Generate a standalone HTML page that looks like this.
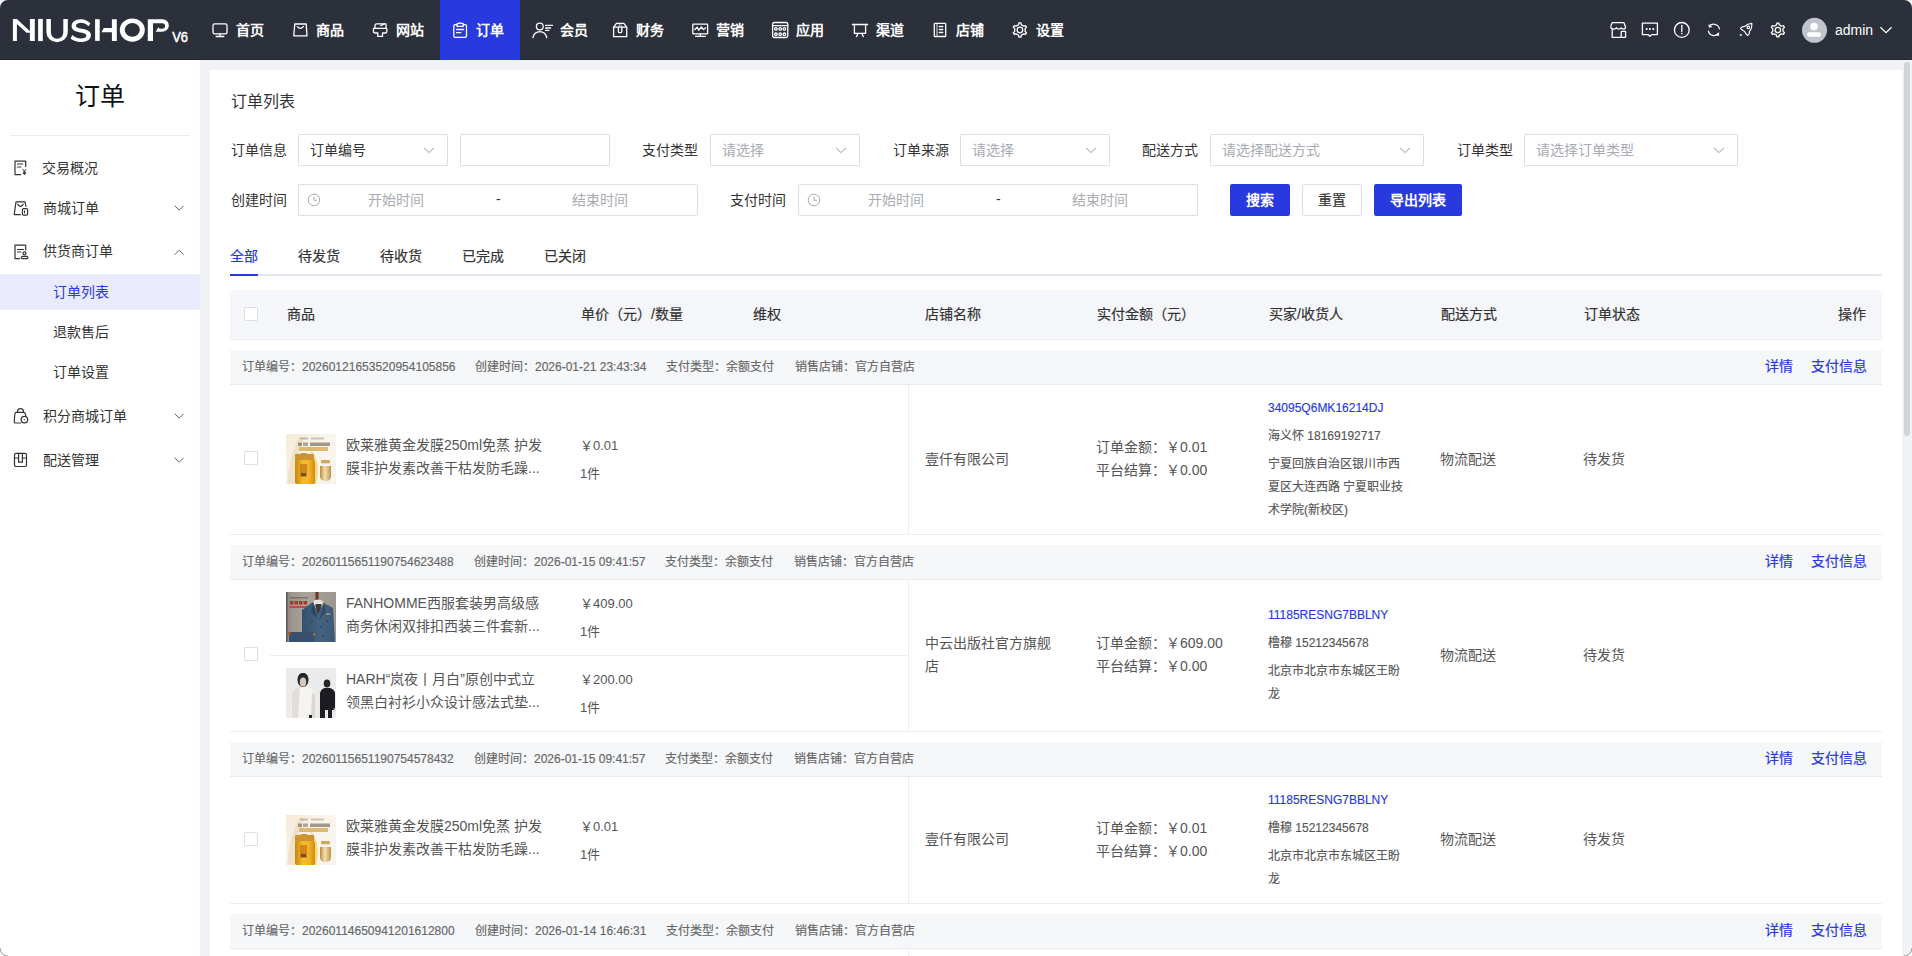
<!DOCTYPE html>
<html lang="zh-CN"><head><meta charset="utf-8"><title>订单列表</title>
<style>
html,body{margin:0;padding:0;width:1912px;height:956px;overflow:hidden;background:#fff}
body{position:relative;font-family:"Liberation Sans",sans-serif}
.t{position:absolute;line-height:1;white-space:nowrap}
.b{position:absolute;display:block}
</style></head><body>
<div class="b" style="left:0px;top:0px;width:1912px;height:60px;background:#2c303b"></div>
<div class="b" style="left:0px;top:59px;width:1912px;height:1px;background:#23262f"></div>
<div class="b" style="left:440px;top:0px;width:80px;height:60px;background:#2839e0"></div>
<svg class="b" style="left:0px;top:0px" width="200" height="60" viewBox="0 0 200 60" fill="none">
<g fill="#fff">
<path d="M12.9 18.9H16.9L29.9 31.2V18.9H34.8V41.1H29.9V32.8H26.6L16.9 23.9V41.1H12.9Z"/>
<rect x="38.1" y="18.9" width="4.7" height="22.2"/>
<path d="M46.4 18.9H50.9V32.5A6.2 6.2 0 0 0 63.3 32.5V18.9H67.8V32.2A10.7 10 0 0 1 46.4 32.2Z"/>
<path d="M90.4 23.4C88 21 85 19.2 80.8 19.2C75 19.2 71.6 22.3 71.6 26C71.6 30.6 76 31.6 80.6 32.5C84.6 33.3 86.4 34 86.4 35.7C86.4 37.3 84.4 38.4 81 38.4C77.6 38.4 74.6 37.1 72.4 34.9L70.6 38.6C73 40.6 76.6 42 81 42C86.8 42 90.9 39.4 90.9 35.2C90.9 30.8 86.6 29.7 81.8 28.8C77.6 28 76 27.4 76 25.8C76 24.2 78 22.8 80.9 22.8C84 22.8 86.4 24 88.4 26.2Z"/>
<rect x="95.1" y="19.2" width="4.6" height="21.7"/>
<path d="M103.8 27.9H111.9V19.2H116.8V40.9H111.9V32.2H101.5Z"/>
<path fill-rule="evenodd" d="M132.3 18.4A12.5 11.65 0 1 1 132.3 41.7A12.5 11.65 0 1 1 132.3 18.4ZM132.3 22.9A7.6 6.9 0 1 0 132.3 36.7A7.6 6.9 0 1 0 132.3 22.9Z"/>
<path d="M147.8 19.2H162.6A6.25 6.25 0 0 1 162.6 31.7H155.7L158.4 27.2L159.6 28.7H162.3A2.75 2.75 0 0 0 162.3 23.2H153V40.9H147.8Z"/>
</g>
<text x="172.2" y="41.8" fill="#fff" stroke="#fff" stroke-width="0.55" font-family="Liberation Sans" font-size="14.6" textLength="15.8" lengthAdjust="spacingAndGlyphs">V6</text>
</svg>
<svg class="b" style="left:208px;top:18px" width="30" height="24" viewBox="0 0 30 24" fill="none"><rect x="5" y="5.9" width="14" height="9.9" rx="1.6" stroke="#fff" stroke-width="1.3" stroke-linecap="round" stroke-linejoin="round"/><path d="M12 15.8V18.3M8.2 18.5H15.8" stroke="#fff" stroke-width="1.3" stroke-linecap="round" stroke-linejoin="round"/></svg>
<div class="t" style="left:236px;top:23px;font-size:14px;color:#fff;font-weight:700;">首页</div>
<svg class="b" style="left:288px;top:18px" width="30" height="24" viewBox="0 0 30 24" fill="none"><path d="M6.8 6H18.2L19 17.8H5.8Z" stroke="#fff" stroke-width="1.3" stroke-linecap="round" stroke-linejoin="round"/><path d="M9.3 8.6Q12.3 12 15.4 8.6" stroke="#fff" stroke-width="1.3" stroke-linecap="round" stroke-linejoin="round"/></svg>
<div class="t" style="left:316px;top:23px;font-size:14px;color:#fff;font-weight:700;">商品</div>
<svg class="b" style="left:368px;top:18px" width="30" height="24" viewBox="0 0 30 24" fill="none"><path d="M5.5 10.3H18.8V13.4Q18.8 15 17.2 15H14.5V18.4H9.8V15H7.1Q5.5 15 5.5 13.4Z" stroke="#fff" stroke-width="1.3" stroke-linecap="round" stroke-linejoin="round"/><path d="M7 10.3V7.2Q7.2 5.8 8.6 5.8H18V10.3" stroke="#fff" stroke-width="1.3" stroke-linecap="round" stroke-linejoin="round"/><path d="M12.8 7.6L16.2 5.9" stroke="#fff" stroke-width="1.3" stroke-linecap="round" stroke-linejoin="round"/></svg>
<div class="t" style="left:396px;top:23px;font-size:14px;color:#fff;font-weight:700;">网站</div>
<svg class="b" style="left:448px;top:18px" width="30" height="24" viewBox="0 0 30 24" fill="none"><path d="M9 6.6H7.2Q5.8 6.6 5.8 8V18Q5.8 19.4 7.2 19.4H17.1Q18.5 19.4 18.5 18V8Q18.5 6.6 17.1 6.6H15.3" stroke="#fff" stroke-width="1.3" stroke-linecap="round" stroke-linejoin="round"/><path d="M9 8.3V6.2Q9 5.4 10 5.4H11.4Q12.2 4.2 13 5.4H14.4Q15.3 5.4 15.3 6.2V8.3Z" stroke="#fff" stroke-width="1.3" stroke-linecap="round" stroke-linejoin="round"/><path d="M8.6 11.5H15.6M8.6 14.7H12.8" stroke="#fff" stroke-width="1.3" stroke-linecap="round" stroke-linejoin="round"/></svg>
<div class="t" style="left:476px;top:23px;font-size:14px;color:#fff;font-weight:700;">订单</div>
<svg class="b" style="left:528px;top:18px" width="30" height="24" viewBox="0 0 30 24" fill="none"><circle cx="11.8" cy="8.5" r="3.4" stroke="#fff" stroke-width="1.3" stroke-linecap="round" stroke-linejoin="round"/><path d="M5 19.6A6.9 6.9 0 0 1 18.7 19.6" stroke="#fff" stroke-width="1.3" stroke-linecap="round" stroke-linejoin="round"/><path d="M17.6 7.3H24.5M17.6 10H22.6M17.6 12.4H20.8" stroke="#fff" stroke-width="1.3" stroke-linecap="round" stroke-linejoin="round"/></svg>
<div class="t" style="left:560px;top:23px;font-size:14px;color:#fff;font-weight:700;">会员</div>
<svg class="b" style="left:608px;top:18px" width="30" height="24" viewBox="0 0 30 24" fill="none"><path d="M5.6 9.2V18.7H18.7V9.2L15.8 5.3H8.5Z" stroke="#fff" stroke-width="1.3" stroke-linecap="round" stroke-linejoin="round"/><path d="M5.6 9.2H18.7" stroke="#fff" stroke-width="1.3" stroke-linecap="round" stroke-linejoin="round"/><path d="M10.4 9.2V13.6Q10.4 14.6 11.4 14.6H12.8Q13.8 14.6 13.8 13.6V9.2" stroke="#fff" stroke-width="1.3" stroke-linecap="round" stroke-linejoin="round"/><path d="M11 9L11.6 5.6M13.3 9L12.8 5.6" stroke="#fff" stroke-width="1" opacity=".6"/></svg>
<div class="t" style="left:636px;top:23px;font-size:14px;color:#fff;font-weight:700;">财务</div>
<svg class="b" style="left:688px;top:18px" width="30" height="24" viewBox="0 0 30 24" fill="none"><rect x="4.8" y="6.2" width="14.8" height="9.6" rx=".6" stroke="#fff" stroke-width="1.3" stroke-linecap="round" stroke-linejoin="round"/><path d="M6.8 11.5L9.2 9.3L10.8 12.2L13.4 9L15.6 11.6L17.7 9.6" stroke="#fff" stroke-width="1.3" stroke-linecap="round" stroke-linejoin="round"/><path d="M12.3 15.8V17.4M7.6 18.3H17.4" stroke="#fff" stroke-width="1.3" stroke-linecap="round" stroke-linejoin="round"/></svg>
<div class="t" style="left:716px;top:23px;font-size:14px;color:#fff;font-weight:700;">营销</div>
<svg class="b" style="left:768px;top:18px" width="30" height="24" viewBox="0 0 30 24" fill="none"><rect x="4.6" y="4.5" width="15.2" height="15" rx="1.8" stroke="#fff" stroke-width="1.3" stroke-linecap="round" stroke-linejoin="round"/><path d="M4.6 7.6H19.8" stroke="#fff" stroke-width="1.3" stroke-linecap="round" stroke-linejoin="round"/><circle cx="7.9" cy="10.9" r="1.3" stroke="#fff" stroke-width="1.3" stroke-linecap="round" stroke-linejoin="round"/><circle cx="12.2" cy="10.9" r="1.3" stroke="#fff" stroke-width="1.3" stroke-linecap="round" stroke-linejoin="round"/><circle cx="16.4" cy="10.9" r="1.3" stroke="#fff" stroke-width="1.3" stroke-linecap="round" stroke-linejoin="round"/><circle cx="7.9" cy="16.3" r="1.3" stroke="#fff" stroke-width="1.3" stroke-linecap="round" stroke-linejoin="round"/><circle cx="12.2" cy="16.3" r="1.3" stroke="#fff" stroke-width="1.3" stroke-linecap="round" stroke-linejoin="round"/><circle cx="16.4" cy="16.3" r="1.3" stroke="#fff" stroke-width="1.3" stroke-linecap="round" stroke-linejoin="round"/></svg>
<div class="t" style="left:796px;top:23px;font-size:14px;color:#fff;font-weight:700;">应用</div>
<svg class="b" style="left:848px;top:18px" width="30" height="24" viewBox="0 0 30 24" fill="none"><path d="M4.4 6.5H19.6" stroke="#fff" stroke-width="1.3" stroke-linecap="round" stroke-linejoin="round"/><path d="M6.4 6.5V15.4H17.6V6.5" stroke="#fff" stroke-width="1.3" stroke-linecap="round" stroke-linejoin="round"/><path d="M9.8 15.6Q9.3 17.6 8.4 18.6M14 15.6Q14.5 17.6 15.4 18.6" stroke="#fff" stroke-width="1.3" stroke-linecap="round" stroke-linejoin="round"/></svg>
<div class="t" style="left:876px;top:23px;font-size:14px;color:#fff;font-weight:700;">渠道</div>
<svg class="b" style="left:928px;top:18px" width="30" height="24" viewBox="0 0 30 24" fill="none"><rect x="6.3" y="5.4" width="11.4" height="13.1" rx=".6" stroke="#fff" stroke-width="1.3" stroke-linecap="round" stroke-linejoin="round"/><path d="M9 6V18" stroke="#bbb" stroke-width="1.3"/><path d="M11.3 8.5H14.8M11.3 11.5H14.8M11.3 14.5H14.8" stroke="#fff" stroke-width="1.3" stroke-linecap="round" stroke-linejoin="round"/></svg>
<div class="t" style="left:956px;top:23px;font-size:14px;color:#fff;font-weight:700;">店铺</div>
<svg class="b" style="left:1008px;top:18px" width="30" height="24" viewBox="0 0 30 24" fill="none"><path d="M10.50 6.78 L10.88 4.97 L12.92 4.97 L13.30 6.78 L15.72 8.18 L17.48 7.60 L18.49 9.37 L17.12 10.60 L17.12 13.40 L18.49 14.63 L17.48 16.40 L15.72 15.82 L13.30 17.22 L12.92 19.03 L10.88 19.03 L10.50 17.22 L8.08 15.82 L6.32 16.40 L5.31 14.63 L6.68 13.40 L6.68 10.60 L5.31 9.37 L6.32 7.60 L8.08 8.18Z" stroke="#fff" stroke-width="1.3" stroke-linecap="round" stroke-linejoin="round"/><circle cx="11.9" cy="12" r="2.8" stroke="#fff" stroke-width="1.3" stroke-linecap="round" stroke-linejoin="round"/></svg>
<div class="t" style="left:1036px;top:23px;font-size:14px;color:#fff;font-weight:700;">设置</div>
<svg class="b" style="left:1604px;top:18px" width="30" height="24" viewBox="0 0 30 24" fill="none"><path d="M8.4 4.6H19.8L21.4 8.6Q21.6 11.2 19.4 11.2Q17.8 11.2 17.2 9.8Q16.4 11.2 14.8 11.2Q13.2 11.2 12.4 9.8Q11.6 11.2 10 11.2Q8.2 11.2 6.8 9.8Q6.4 7.6 8.4 4.6Z" stroke="#fff" stroke-width="1.3" stroke-linecap="round" stroke-linejoin="round"/><path d="M8.2 11.4V19.4H16.6" stroke="#fff" stroke-width="1.3" stroke-linecap="round" stroke-linejoin="round"/><rect x="17.2" y="13.4" width="4.4" height="6" rx=".6" stroke="#fff" stroke-width="1.3" stroke-linecap="round" stroke-linejoin="round"/></svg>
<svg class="b" style="left:1636px;top:18px" width="30" height="24" viewBox="0 0 30 24" fill="none"><path d="M6.4 5.2H21.4V16.6H15.6L13.9 18.3L12.2 16.6H6.4Z" stroke="#fff" stroke-width="1.3" stroke-linecap="round" stroke-linejoin="round"/><path d="M10.6 11H10.8M13.8 11H14M17.2 11H17.4" stroke="#fff" stroke-width="1.8" stroke-linecap="round"/></svg>
<svg class="b" style="left:1668px;top:18px" width="30" height="24" viewBox="0 0 30 24" fill="none"><circle cx="13.8" cy="11.9" r="7.4" stroke="#fff" stroke-width="1.3" stroke-linecap="round" stroke-linejoin="round"/><path d="M13.8 7.3V13.6" stroke="#fff" stroke-width="1.3" stroke-linecap="round" stroke-linejoin="round"/><circle cx="13.8" cy="15.6" r=".8" fill="#fff"/></svg>
<svg class="b" style="left:1700px;top:18px" width="30" height="24" viewBox="0 0 30 24" fill="none"><path d="M9.2 8.4A5.8 5.8 0 0 1 19.5 11.4" stroke="#fff" stroke-width="1.15" fill="none"/><path d="M8.3 12.6A5.8 5.8 0 0 0 18.7 15.2" stroke="#fff" stroke-width="1.15" fill="none"/><path d="M8.6 5.9L8.8 9.8L12.3 9Z" fill="#fff"/><path d="M19.2 14.2L18.9 18L15.6 17Z" fill="#fff"/></svg>
<svg class="b" style="left:1734px;top:18px" width="30" height="24" viewBox="0 0 30 24" fill="none"><path d="M17.8 5.4C14.6 5.6 12.4 6.8 10.8 8.4L8.4 8.8Q6.8 9.4 6.6 10.6L8.6 12.2Q10 12.8 10.6 13.6Q11.4 14.4 11.8 15.6L13.4 17.4Q14.6 17.2 15.2 15.6L15.6 13.2C17.2 11.6 18 9 17.8 5.4Z" stroke="#fff" stroke-width="1.2" stroke-linejoin="round" fill="none"/><circle cx="14.3" cy="9.4" r="1.3" stroke="#fff" stroke-width="1.1" fill="none"/><path d="M6.9 15.4L7.4 16.6L8.6 17.1L7.4 17.6L6.9 18.8L6.4 17.6L5.2 17.1L6.4 16.6Z" fill="#fff"/></svg>
<svg class="b" style="left:1766px;top:18px" width="30" height="24" viewBox="0 0 30 24" fill="none"><path d="M10.53 6.88 L10.90 5.07 L12.90 5.07 L13.27 6.88 L15.65 8.25 L17.40 7.67 L18.40 9.41 L17.02 10.63 L17.02 13.37 L18.40 14.59 L17.40 16.33 L15.65 15.75 L13.27 17.12 L12.90 18.93 L10.90 18.93 L10.53 17.12 L8.15 15.75 L6.40 16.33 L5.40 14.59 L6.78 13.37 L6.78 10.63 L5.40 9.41 L6.40 7.67 L8.15 8.25Z" stroke="#fff" stroke-width="1.3" stroke-linecap="round" stroke-linejoin="round"/><circle cx="11.9" cy="12" r="2.7" stroke="#fff" stroke-width="1.3" stroke-linecap="round" stroke-linejoin="round"/></svg>
<svg class="b" style="left:1800px;top:16px" width="30" height="30" viewBox="0 0 30 30" fill="none"><circle cx="14.5" cy="14.3" r="12.5" fill="#c0c4cc"/><circle cx="14" cy="10.5" r="3.8" fill="#fff"/><rect x="7" y="16.2" width="14" height="4.6" rx="2.3" fill="#fff"/></svg>
<div class="t" style="left:1835px;top:23px;font-size:14px;color:#fff;font-weight:400;">admin</div>
<svg class="b" style="left:1876px;top:18px" width="20" height="24" viewBox="0 0 20 24" fill="none"><path d="M4.4 9.2L10 14.6L15.6 9.2" stroke="#fff" stroke-width="1.2" fill="none"/></svg>
<div class="b" style="left:0px;top:60px;width:200px;height:896px;background:#fff"></div>
<div class="t" style="left:75px;top:84px;font-size:25px;color:#111;font-weight:400;letter-spacing:0px;">订单</div>
<div class="b" style="left:10px;top:135px;width:180px;height:1px;background:#e9eaf2"></div>
<svg class="b" style="left:10px;top:156px" width="24" height="24" viewBox="0 0 24 24" fill="none"><path d="M10.8 18.6H5V5.2H15.7V10.5" stroke="#333" stroke-width="1.2" stroke-linecap="round" stroke-linejoin="round"/><path d="M7.4 8H12.7M7.4 11H10.8" stroke="#333" stroke-width="1.2" stroke-linecap="round" stroke-linejoin="round"/><path d="M12.6 13.2L14.4 15.2L16.2 13.2M14.4 15.2V18.8M12.8 16.2H16M12.8 17.6H16" stroke="#333" stroke-width="1"/></svg>
<svg class="b" style="left:10px;top:196px" width="24" height="24" viewBox="0 0 24 24" fill="none"><path d="M10.5 18.6H4.2L6 5.8H15L16 10.5" stroke="#333" stroke-width="1.2" stroke-linecap="round" stroke-linejoin="round"/><path d="M7.8 8.3Q10.5 12.3 13.2 8.3" stroke="#333" stroke-width="1.2" stroke-linecap="round" stroke-linejoin="round"/><rect x="12.4" y="12.6" width="5.2" height="6.6" rx="1.2" stroke="#333" stroke-width="1.2" stroke-linecap="round" stroke-linejoin="round"/><path d="M14.5 14.4V17.4" stroke="#333" stroke-width="1"/></svg>
<svg class="b" style="left:10px;top:240px" width="24" height="24" viewBox="0 0 24 24" fill="none"><path d="M9.6 18.6H5V5.2H15.7V10" stroke="#333" stroke-width="1.2" stroke-linecap="round" stroke-linejoin="round"/><path d="M7.4 9.5H13.6M7.4 12H10.8" stroke="#333" stroke-width="1.2" stroke-linecap="round" stroke-linejoin="round"/><circle cx="14.5" cy="13.3" r="1.5" stroke="#333" stroke-width="1.2" stroke-linecap="round" stroke-linejoin="round"/><rect x="11.4" y="16.3" width="6.4" height="2.4" rx="1" stroke="#333" stroke-width="1.2" stroke-linecap="round" stroke-linejoin="round"/></svg>
<svg class="b" style="left:10px;top:404px" width="24" height="24" viewBox="0 0 24 24" fill="none"><path d="M10.4 19H6Q4.2 19 4.3 17.2L4.8 10Q5 8.3 6.6 8.3H13.6Q15 8.3 15.4 10L15.8 11.5" stroke="#333" stroke-width="1.2" stroke-linecap="round" stroke-linejoin="round"/><path d="M7.5 8.3V7.6A3 3 0 0 1 13.5 7.6V8.3" stroke="#333" stroke-width="1.2" stroke-linecap="round" stroke-linejoin="round"/><circle cx="14.4" cy="15.6" r="3.3" stroke="#333" stroke-width="1.2" stroke-linecap="round" stroke-linejoin="round"/><circle cx="14.4" cy="15.6" r=".7" fill="#333"/></svg>
<svg class="b" style="left:10px;top:448px" width="24" height="24" viewBox="0 0 24 24" fill="none"><rect x="4.5" y="5.3" width="12" height="13.2" rx="1.6" stroke="#333" stroke-width="1.2" stroke-linecap="round" stroke-linejoin="round"/><path d="M4.5 10H8.4M12.6 10H16.5" stroke="#333" stroke-width="1.2" stroke-linecap="round" stroke-linejoin="round"/><path d="M8.6 5.3V14.2H12.4V5.3" stroke="#333" stroke-width="1.2" stroke-linecap="round" stroke-linejoin="round"/></svg>
<div class="t" style="left:42px;top:161px;font-size:14px;color:#333;font-weight:400;">交易概况</div>
<div class="t" style="left:43px;top:201px;font-size:14px;color:#333;font-weight:400;">商城订单</div>
<div class="t" style="left:43px;top:244px;font-size:14px;color:#333;font-weight:400;">供货商订单</div>
<div class="t" style="left:43px;top:409px;font-size:14px;color:#333;font-weight:400;">积分商城订单</div>
<div class="t" style="left:43px;top:453px;font-size:14px;color:#333;font-weight:400;">配送管理</div>
<svg class="b" style="left:172px;top:200px" width="14" height="14" viewBox="0 0 14 14" fill="none"><path d="M2.7 5.7L7.2 10.2L11.7 5.7" stroke="#666" stroke-width="1" fill="none"/></svg>
<svg class="b" style="left:172px;top:244px" width="14" height="14" viewBox="0 0 14 14" fill="none"><path d="M2.7 10.7L7.2 6.2L11.7 10.7" stroke="#666" stroke-width="1" fill="none"/></svg>
<svg class="b" style="left:172px;top:408px" width="14" height="14" viewBox="0 0 14 14" fill="none"><path d="M2.7 5.7L7.2 10.2L11.7 5.7" stroke="#666" stroke-width="1" fill="none"/></svg>
<svg class="b" style="left:172px;top:452px" width="14" height="14" viewBox="0 0 14 14" fill="none"><path d="M2.7 5.7L7.2 10.2L11.7 5.7" stroke="#666" stroke-width="1" fill="none"/></svg>
<div class="b" style="left:0px;top:274px;width:200px;height:36px;background:#e9ebfc"></div>
<div class="t" style="left:53px;top:285px;font-size:14px;color:#2839e0;font-weight:400;">订单列表</div>
<div class="t" style="left:53px;top:325px;font-size:14px;color:#333;font-weight:400;">退款售后</div>
<div class="t" style="left:53px;top:365px;font-size:14px;color:#333;font-weight:400;">订单设置</div>
<div class="b" style="left:200px;top:60px;width:1712px;height:896px;background:#f1f2f5"></div>
<div class="b" style="left:210px;top:70px;width:1692px;height:900px;background:#fff"></div>
<div class="b" style="left:1904px;top:62px;width:6px;height:374px;background:#d3d4d8;border-radius:3px"></div>
<div class="t" style="left:231px;top:94px;font-size:16px;color:#333;font-weight:400;">订单列表</div>
<div class="t" style="left:231px;top:143px;font-size:14px;color:#333;font-weight:400;">订单信息</div>
<div class="b" style="left:298px;top:134px;width:150px;height:32px;box-sizing:border-box;border:1px solid #dcdfe6;border-radius:1px;background:#fff"></div>
<div class="t" style="left:310px;top:143px;font-size:14px;color:#333;font-weight:400;">订单编号</div>
<svg class="b" style="left:422px;top:143px" width="14" height="14" viewBox="0 0 14 14" fill="none"><path d="M2 4.8L7 9.6L12 4.8" stroke="#b4b7be" stroke-width="1.1" fill="none"/></svg>
<div class="b" style="left:460px;top:134px;width:150px;height:32px;box-sizing:border-box;border:1px solid #dcdfe6;border-radius:1px"></div>
<div class="t" style="left:642px;top:143px;font-size:14px;color:#333;font-weight:400;">支付类型</div>
<div class="b" style="left:710px;top:134px;width:150px;height:32px;box-sizing:border-box;border:1px solid #dcdfe6;border-radius:1px;background:#fff"></div>
<div class="t" style="left:722px;top:143px;font-size:14px;color:#a8abb2;font-weight:400;">请选择</div>
<svg class="b" style="left:834px;top:143px" width="14" height="14" viewBox="0 0 14 14" fill="none"><path d="M2 4.8L7 9.6L12 4.8" stroke="#b4b7be" stroke-width="1.1" fill="none"/></svg>
<div class="t" style="left:893px;top:143px;font-size:14px;color:#333;font-weight:400;">订单来源</div>
<div class="b" style="left:960px;top:134px;width:150px;height:32px;box-sizing:border-box;border:1px solid #dcdfe6;border-radius:1px;background:#fff"></div>
<div class="t" style="left:972px;top:143px;font-size:14px;color:#a8abb2;font-weight:400;">请选择</div>
<svg class="b" style="left:1084px;top:143px" width="14" height="14" viewBox="0 0 14 14" fill="none"><path d="M2 4.8L7 9.6L12 4.8" stroke="#b4b7be" stroke-width="1.1" fill="none"/></svg>
<div class="t" style="left:1142px;top:143px;font-size:14px;color:#333;font-weight:400;">配送方式</div>
<div class="b" style="left:1210px;top:134px;width:214px;height:32px;box-sizing:border-box;border:1px solid #dcdfe6;border-radius:1px;background:#fff"></div>
<div class="t" style="left:1222px;top:143px;font-size:14px;color:#a8abb2;font-weight:400;">请选择配送方式</div>
<svg class="b" style="left:1398px;top:143px" width="14" height="14" viewBox="0 0 14 14" fill="none"><path d="M2 4.8L7 9.6L12 4.8" stroke="#b4b7be" stroke-width="1.1" fill="none"/></svg>
<div class="t" style="left:1457px;top:143px;font-size:14px;color:#333;font-weight:400;">订单类型</div>
<div class="b" style="left:1524px;top:134px;width:214px;height:32px;box-sizing:border-box;border:1px solid #dcdfe6;border-radius:1px;background:#fff"></div>
<div class="t" style="left:1536px;top:143px;font-size:14px;color:#a8abb2;font-weight:400;">请选择订单类型</div>
<svg class="b" style="left:1712px;top:143px" width="14" height="14" viewBox="0 0 14 14" fill="none"><path d="M2 4.8L7 9.6L12 4.8" stroke="#b4b7be" stroke-width="1.1" fill="none"/></svg>
<div class="t" style="left:231px;top:193px;font-size:14px;color:#333;font-weight:400;">创建时间</div>
<div class="b" style="left:298px;top:184px;width:400px;height:32px;box-sizing:border-box;border:1px solid #dcdfe6;border-radius:1px"></div>
<svg class="b" style="left:306px;top:192px" width="16" height="16" viewBox="0 0 16 16" fill="none"><circle cx="8" cy="8" r="5.8" stroke="#a8abb2" stroke-width="1" fill="none"/><path d="M8 4.6V8.3H10.8" stroke="#a8abb2" stroke-width="1" fill="none"/></svg>
<div class="t" style="left:368px;top:193px;font-size:14px;color:#a8abb2;font-weight:400;">开始时间</div>
<div class="t" style="left:496px;top:192px;font-size:14px;color:#333;font-weight:400;">-</div>
<div class="t" style="left:572px;top:193px;font-size:14px;color:#a8abb2;font-weight:400;">结束时间</div>
<div class="t" style="left:730px;top:193px;font-size:14px;color:#333;font-weight:400;">支付时间</div>
<div class="b" style="left:798px;top:184px;width:400px;height:32px;box-sizing:border-box;border:1px solid #dcdfe6;border-radius:1px"></div>
<svg class="b" style="left:806px;top:192px" width="16" height="16" viewBox="0 0 16 16" fill="none"><circle cx="8" cy="8" r="5.8" stroke="#a8abb2" stroke-width="1" fill="none"/><path d="M8 4.6V8.3H10.8" stroke="#a8abb2" stroke-width="1" fill="none"/></svg>
<div class="t" style="left:868px;top:193px;font-size:14px;color:#a8abb2;font-weight:400;">开始时间</div>
<div class="t" style="left:996px;top:192px;font-size:14px;color:#333;font-weight:400;">-</div>
<div class="t" style="left:1072px;top:193px;font-size:14px;color:#a8abb2;font-weight:400;">结束时间</div>
<div class="b" style="left:1230px;top:184px;width:60px;height:32px;background:#2839e0;border-radius:2px"></div>
<div class="t" style="left:1246px;top:193px;font-size:14px;color:#fff;font-weight:700;">搜索</div>
<div class="b" style="left:1302px;top:184px;width:60px;height:32px;box-sizing:border-box;border:1px solid #dcdfe6;border-radius:1px;background:#fff"></div>
<div class="t" style="left:1318px;top:193px;font-size:14px;color:#333;font-weight:400;-webkit-text-stroke:0.2px #333;">重置</div>
<div class="b" style="left:1374px;top:184px;width:88px;height:32px;background:#2839e0;border-radius:2px"></div>
<div class="t" style="left:1390px;top:193px;font-size:14px;color:#fff;font-weight:700;">导出列表</div>
<div class="b" style="left:230px;top:274px;width:1652px;height:2px;background:#e4e7ed"></div>
<div class="b" style="left:230px;top:274px;width:28px;height:2px;background:#2839e0"></div>
<div class="t" style="left:230px;top:249px;font-size:14px;color:#2839e0;font-weight:400;-webkit-text-stroke:0.2px #2839e0;">全部</div>
<div class="t" style="left:298px;top:249px;font-size:14px;color:#333;font-weight:400;-webkit-text-stroke:0.2px #333;">待发货</div>
<div class="t" style="left:380px;top:249px;font-size:14px;color:#333;font-weight:400;-webkit-text-stroke:0.2px #333;">待收货</div>
<div class="t" style="left:462px;top:249px;font-size:14px;color:#333;font-weight:400;-webkit-text-stroke:0.2px #333;">已完成</div>
<div class="t" style="left:544px;top:249px;font-size:14px;color:#333;font-weight:400;-webkit-text-stroke:0.2px #333;">已关闭</div>
<div class="b" style="left:230px;top:290px;width:1652px;height:49px;background:#f5f6f9"></div>
<div class="b" style="left:230px;top:339px;width:1652px;height:1px;background:#ebeef5"></div>
<div class="b" style="left:244px;top:307px;width:14px;height:14px;box-sizing:border-box;border:1px solid #dcdfe6;border-radius:1px;background:#fff"></div>
<div class="t" style="left:287px;top:307px;font-size:14px;color:#333;font-weight:400;-webkit-text-stroke:0.2px #333;">商品</div>
<div class="t" style="left:581px;top:307px;font-size:14px;color:#333;font-weight:400;-webkit-text-stroke:0.2px #333;">单价（元）/数量</div>
<div class="t" style="left:753px;top:307px;font-size:14px;color:#333;font-weight:400;-webkit-text-stroke:0.2px #333;">维权</div>
<div class="t" style="left:925px;top:307px;font-size:14px;color:#333;font-weight:400;-webkit-text-stroke:0.2px #333;">店铺名称</div>
<div class="t" style="left:1097px;top:307px;font-size:14px;color:#333;font-weight:400;-webkit-text-stroke:0.2px #333;">实付金额（元）</div>
<div class="t" style="left:1269px;top:307px;font-size:14px;color:#333;font-weight:400;-webkit-text-stroke:0.2px #333;">买家/收货人</div>
<div class="t" style="left:1441px;top:307px;font-size:14px;color:#333;font-weight:400;-webkit-text-stroke:0.2px #333;">配送方式</div>
<div class="t" style="left:1584px;top:307px;font-size:14px;color:#333;font-weight:400;-webkit-text-stroke:0.2px #333;">订单状态</div>
<div class="t" style="left:1838px;top:307px;font-size:14px;color:#333;font-weight:400;-webkit-text-stroke:0.2px #333;">操作</div>
<div class="b" style="left:230px;top:350px;width:1652px;height:34px;background:#f6f7f9"></div>
<div class="b" style="left:230px;top:384px;width:1652px;height:1px;background:#e8eaf0"></div>
<div class="t" style="left:242px;top:361px;font-size:12px;color:#666;font-weight:400;-webkit-text-stroke:0.15px #666;">订单编号：20260121653520954105856</div>
<div class="t" style="left:475px;top:361px;font-size:12px;color:#666;font-weight:400;-webkit-text-stroke:0.15px #666;">创建时间：2026-01-21 23:43:34</div>
<div class="t" style="left:666px;top:361px;font-size:12px;color:#666;font-weight:400;-webkit-text-stroke:0.15px #666;">支付类型：余额支付</div>
<div class="t" style="left:795px;top:361px;font-size:12px;color:#666;font-weight:400;-webkit-text-stroke:0.15px #666;">销售店铺：官方自营店</div>
<div class="t" style="left:1765px;top:359px;font-size:14px;color:#2839e0;font-weight:400;-webkit-text-stroke:0.2px #2839e0;">详情</div>
<div class="t" style="left:1811px;top:359px;font-size:14px;color:#2839e0;font-weight:400;-webkit-text-stroke:0.2px #2839e0;">支付信息</div>
<div class="b" style="left:908px;top:385px;width:1px;height:149px;background:#ebeef5"></div>
<div class="b" style="left:230px;top:534px;width:1652px;height:1px;background:#ebeef5"></div>
<div class="b" style="left:244px;top:451px;width:14px;height:14px;box-sizing:border-box;border:1px solid #dcdfe6;border-radius:1px;background:#fff"></div>
<svg class="b" style="left:286px;top:434px" width="50" height="50" viewBox="0 0 50 50" fill="none">
<defs><linearGradient id="gbg1" x1="0" y1="0" x2="1" y2="1"><stop offset="0" stop-color="#f5ead8"/><stop offset=".5" stop-color="#faf5ee"/><stop offset="1" stop-color="#f6f3ef"/></linearGradient>
<linearGradient id="gb1" x1="0" y1="0" x2="1" y2="0"><stop offset="0" stop-color="#c98512"/><stop offset=".4" stop-color="#f6bb2a"/><stop offset=".7" stop-color="#f2b526"/><stop offset="1" stop-color="#d08a14"/></linearGradient>
<linearGradient id="gj1" x1="0" y1="0" x2="1" y2="0"><stop offset="0" stop-color="#b58a3e"/><stop offset=".45" stop-color="#f5e2b0"/><stop offset="1" stop-color="#b99448"/></linearGradient>
<filter id="bl1"><feGaussianBlur stdDeviation=".4"/></filter></defs>
<rect width="50" height="50" fill="url(#gbg1)"/>
<g filter="url(#bl1)">
<path d="M1 50Q3 22 13 3L19 3Q9 22 11 50Z" fill="#f0e0c4" opacity=".9"/>
<rect x="14" y="3.5" width="8" height="2" fill="#8a8070" opacity=".45"/><rect x="25" y="3.5" width="13" height="2" fill="#8a8070" opacity=".4"/>
<rect x="12" y="8.5" width="4" height="3.5" fill="#6a5a48" opacity=".6"/><rect x="17" y="8.5" width="5" height="3.5" fill="#6a5a48" opacity=".5"/><rect x="24" y="8.5" width="20" height="3.5" fill="#5a4a3a" opacity=".55"/>
<rect x="13" y="13" width="29" height="4" fill="#dcba74"/>
<path d="M26 17Q35 30 30 50H24Q30 32 25 17Z" fill="#f6d56a" opacity=".85"/>
<rect x="14" y="19" width="8" height="8" rx="2" fill="#c29440"/>
<rect x="9" y="20" width="19" height="7" rx="1" fill="#cc9430"/>
<rect x="9" y="26" width="20" height="24" rx="2" fill="url(#gb1)"/>
<rect x="14" y="30" width="7" height="13" fill="#c77a1a" opacity=".8"/>
<rect x="15" y="39" width="5" height="3" fill="#4a3a28" opacity=".7"/>
<rect x="35" y="26" width="9" height="3.5" rx="1" fill="#cfa862"/>
<rect x="34.5" y="29.5" width="10" height="2" fill="#f6f3ee"/>
<path d="M34 32H45V42Q45 47 39.5 47Q34 47 34 42Z" fill="url(#gj1)"/>
</g></svg>
<div class="t" style="left:346px;top:438px;font-size:14px;color:#555;font-weight:400;">欧莱雅黄金发膜250ml免蒸 护发</div>
<div class="t" style="left:346px;top:461px;font-size:14px;color:#555;font-weight:400;">膜非护发素改善干枯发防毛躁...</div>
<div class="t" style="left:580px;top:439px;font-size:13px;color:#555;font-weight:400;">￥0.01</div>
<div class="t" style="left:580px;top:467px;font-size:13px;color:#555;font-weight:400;">1件</div>
<div class="t" style="left:925px;top:452px;font-size:14px;color:#555;font-weight:400;">壹仟有限公司</div>
<div class="t" style="left:1096px;top:440px;font-size:14px;color:#555;font-weight:400;">订单金额：￥0.01</div>
<div class="t" style="left:1096px;top:463px;font-size:14px;color:#555;font-weight:400;">平台结算：￥0.00</div>
<div class="t" style="left:1268px;top:402px;font-size:12px;color:#2839e0;font-weight:400;-webkit-text-stroke:0.15px #2839e0;">34095Q6MK16214DJ</div>
<div class="t" style="left:1268px;top:430px;font-size:12px;color:#555;font-weight:400;-webkit-text-stroke:0.15px #555;">海义怀 18169192717</div>
<div class="t" style="left:1268px;top:458px;font-size:12px;color:#555;font-weight:400;-webkit-text-stroke:0.15px #555;">宁夏回族自治区银川市西</div>
<div class="t" style="left:1268px;top:481px;font-size:12px;color:#555;font-weight:400;-webkit-text-stroke:0.15px #555;">夏区大连西路 宁夏职业技</div>
<div class="t" style="left:1268px;top:504px;font-size:12px;color:#555;font-weight:400;-webkit-text-stroke:0.15px #555;">术学院(新校区)</div>
<div class="t" style="left:1440px;top:452px;font-size:14px;color:#555;font-weight:400;">物流配送</div>
<div class="t" style="left:1583px;top:452px;font-size:14px;color:#555;font-weight:400;">待发货</div>
<div class="b" style="left:230px;top:545px;width:1652px;height:34px;background:#f6f7f9"></div>
<div class="b" style="left:230px;top:579px;width:1652px;height:1px;background:#e8eaf0"></div>
<div class="t" style="left:242px;top:556px;font-size:12px;color:#666;font-weight:400;-webkit-text-stroke:0.15px #666;">订单编号：20260115651190754623488</div>
<div class="t" style="left:474px;top:556px;font-size:12px;color:#666;font-weight:400;-webkit-text-stroke:0.15px #666;">创建时间：2026-01-15 09:41:57</div>
<div class="t" style="left:665px;top:556px;font-size:12px;color:#666;font-weight:400;-webkit-text-stroke:0.15px #666;">支付类型：余额支付</div>
<div class="t" style="left:794px;top:556px;font-size:12px;color:#666;font-weight:400;-webkit-text-stroke:0.15px #666;">销售店铺：官方自营店</div>
<div class="t" style="left:1765px;top:554px;font-size:14px;color:#2839e0;font-weight:400;-webkit-text-stroke:0.2px #2839e0;">详情</div>
<div class="t" style="left:1811px;top:554px;font-size:14px;color:#2839e0;font-weight:400;-webkit-text-stroke:0.2px #2839e0;">支付信息</div>
<div class="b" style="left:908px;top:580px;width:1px;height:151px;background:#ebeef5"></div>
<div class="b" style="left:270px;top:655px;width:638px;height:1px;background:#ebeef5"></div>
<div class="b" style="left:230px;top:731px;width:1652px;height:1px;background:#ebeef5"></div>
<div class="b" style="left:244px;top:647px;width:14px;height:14px;box-sizing:border-box;border:1px solid #dcdfe6;border-radius:1px;background:#fff"></div>
<svg class="b" style="left:286px;top:592px" width="50" height="50" viewBox="0 0 50 50" fill="none">
<defs><linearGradient id="sbg" x1="0" y1="0" x2="1" y2="0"><stop offset="0" stop-color="#958e86"/><stop offset=".35" stop-color="#a8a29a"/><stop offset="1" stop-color="#9e978f"/></linearGradient>
<linearGradient id="sj" x1="0" y1="0" x2="1" y2="0"><stop offset="0" stop-color="#33506d"/><stop offset=".55" stop-color="#46637f"/><stop offset="1" stop-color="#3b5875"/></linearGradient>
<filter id="bls"><feGaussianBlur stdDeviation=".4"/></filter></defs>
<rect width="50" height="50" fill="url(#sbg)"/>
<g filter="url(#bls)">
<rect x="0" y="0" width="1.5" height="50" fill="#5a544e"/>
<rect x="2.5" y="0" width="1" height="50" fill="#8a847c" opacity=".6"/>
<rect x="4" y="5" width="18" height="1.5" fill="#4a4038" opacity=".45"/>
<rect x="4" y="9" width="3.5" height="3.5" fill="#b0302a"/><rect x="8.5" y="9" width="3.5" height="3.5" fill="#b0302a"/><rect x="13" y="9" width="3.5" height="3.5" fill="#b0302a"/><rect x="17.5" y="9" width="3.5" height="3.5" fill="#b0302a"/>
<rect x="3.5" y="14" width="18" height="2" fill="#b84038" opacity=".8"/>
<rect x="29.5" y="0" width="3" height="8" fill="#6e3028"/>
<path d="M27 9Q32 6 37 9L36 13H28Z" fill="#e6e2dc"/>
<path d="M29.5 12H35.5L34 23H31Z" fill="#3e3a34"/>
<path d="M16 18L27 10L32 22L38 11L47 16L49 50H16Z" fill="url(#sj)"/>
<path d="M27 10L31 26L25 20Z" fill="#2c4662"/>
<path d="M38 11L33 28L40 20Z" fill="#304c68"/>
<rect x="40" y="21" width="4.5" height="2" fill="#8a8a70"/>
<circle cx="26" cy="30" r=".7" fill="#1a2a3a"/><circle cx="41" cy="29" r=".7" fill="#1a2a3a"/><circle cx="37" cy="44" r=".7" fill="#1a2a3a"/><circle cx="35" cy="35" r=".7" fill="#1a2a3a"/>
<rect x="3" y="40" width="25" height="10" fill="#34506c"/>
<rect x="2" y="40" width="2.5" height="3" fill="#a0622a"/>
<rect x="27" y="41" width="2" height="2.5" fill="#b07030"/>
</g></svg>
<div class="t" style="left:346px;top:596px;font-size:14px;color:#555;font-weight:400;">FANHOMME西服套装男高级感</div>
<div class="t" style="left:346px;top:619px;font-size:14px;color:#555;font-weight:400;">商务休闲双排扣西装三件套新...</div>
<div class="t" style="left:580px;top:597px;font-size:13px;color:#555;font-weight:400;">￥409.00</div>
<div class="t" style="left:580px;top:625px;font-size:13px;color:#555;font-weight:400;">1件</div>
<svg class="b" style="left:286px;top:668px" width="50" height="50" viewBox="0 0 50 50" fill="none">
<defs><filter id="blh"><feGaussianBlur stdDeviation=".5"/></filter></defs>
<rect width="50" height="50" fill="#ebebeb"/>
<g filter="url(#blh)">
<path d="M5 50L6 26Q8 20 14 19H22Q28 21 29 27L29 50Z" fill="#f6f4f1"/>
<path d="M6 26Q8 20 14 19L12 50H6Z" fill="#e2ddd8"/>
<path d="M26 24L29 27V50H25Z" fill="#dcd7d2"/>
<ellipse cx="17" cy="12" rx="5.5" ry="7" fill="#2b2b2b"/>
<ellipse cx="17" cy="14" rx="3.2" ry="4.5" fill="#d6c8bc"/>
<path d="M11.5 12Q12 5 17 5Q22 5 22.5 12L21 9Q17 7 13 9Z" fill="#222"/>
<rect x="23" y="47" width="3" height="3" fill="#222"/>
<ellipse cx="41" cy="15.5" rx="3.3" ry="4" fill="#262626"/>
<path d="M34 50V25Q35 21 38.5 20H44Q48 21 49 25V42L46 42V50H42V42H39V50Z" fill="#1d1d20"/>
<path d="M48 40L49 44" stroke="#d8ccc0" stroke-width="1"/>
</g></svg>
<div class="t" style="left:346px;top:672px;font-size:14px;color:#555;font-weight:400;">HARH“岚夜丨月白”原创中式立</div>
<div class="t" style="left:346px;top:695px;font-size:14px;color:#555;font-weight:400;">领黑白衬衫小众设计感法式垫...</div>
<div class="t" style="left:580px;top:673px;font-size:13px;color:#555;font-weight:400;">￥200.00</div>
<div class="t" style="left:580px;top:701px;font-size:13px;color:#555;font-weight:400;">1件</div>
<div class="t" style="left:925px;top:636px;font-size:14px;color:#555;font-weight:400;">中云出版社官方旗舰</div>
<div class="t" style="left:925px;top:659px;font-size:14px;color:#555;font-weight:400;">店</div>
<div class="t" style="left:1096px;top:636px;font-size:14px;color:#555;font-weight:400;">订单金额：￥609.00</div>
<div class="t" style="left:1096px;top:659px;font-size:14px;color:#555;font-weight:400;">平台结算：￥0.00</div>
<div class="t" style="left:1268px;top:609px;font-size:12px;color:#2839e0;font-weight:400;-webkit-text-stroke:0.15px #2839e0;">11185RESNG7BBLNY</div>
<div class="t" style="left:1268px;top:637px;font-size:12px;color:#555;font-weight:400;-webkit-text-stroke:0.15px #555;">橹穆 15212345678</div>
<div class="t" style="left:1268px;top:665px;font-size:12px;color:#555;font-weight:400;-webkit-text-stroke:0.15px #555;">北京市北京市东城区王盼</div>
<div class="t" style="left:1268px;top:688px;font-size:12px;color:#555;font-weight:400;-webkit-text-stroke:0.15px #555;">龙</div>
<div class="t" style="left:1440px;top:648px;font-size:14px;color:#555;font-weight:400;">物流配送</div>
<div class="t" style="left:1583px;top:648px;font-size:14px;color:#555;font-weight:400;">待发货</div>
<div class="b" style="left:230px;top:742px;width:1652px;height:34px;background:#f6f7f9"></div>
<div class="b" style="left:230px;top:776px;width:1652px;height:1px;background:#e8eaf0"></div>
<div class="t" style="left:242px;top:753px;font-size:12px;color:#666;font-weight:400;-webkit-text-stroke:0.15px #666;">订单编号：20260115651190754578432</div>
<div class="t" style="left:474px;top:753px;font-size:12px;color:#666;font-weight:400;-webkit-text-stroke:0.15px #666;">创建时间：2026-01-15 09:41:57</div>
<div class="t" style="left:665px;top:753px;font-size:12px;color:#666;font-weight:400;-webkit-text-stroke:0.15px #666;">支付类型：余额支付</div>
<div class="t" style="left:794px;top:753px;font-size:12px;color:#666;font-weight:400;-webkit-text-stroke:0.15px #666;">销售店铺：官方自营店</div>
<div class="t" style="left:1765px;top:751px;font-size:14px;color:#2839e0;font-weight:400;-webkit-text-stroke:0.2px #2839e0;">详情</div>
<div class="t" style="left:1811px;top:751px;font-size:14px;color:#2839e0;font-weight:400;-webkit-text-stroke:0.2px #2839e0;">支付信息</div>
<div class="b" style="left:908px;top:777px;width:1px;height:126px;background:#ebeef5"></div>
<div class="b" style="left:230px;top:903px;width:1652px;height:1px;background:#ebeef5"></div>
<div class="b" style="left:244px;top:832px;width:14px;height:14px;box-sizing:border-box;border:1px solid #dcdfe6;border-radius:1px;background:#fff"></div>
<svg class="b" style="left:286px;top:815px" width="50" height="50" viewBox="0 0 50 50" fill="none">
<defs><linearGradient id="gbg2" x1="0" y1="0" x2="1" y2="1"><stop offset="0" stop-color="#f5ead8"/><stop offset=".5" stop-color="#faf5ee"/><stop offset="1" stop-color="#f6f3ef"/></linearGradient>
<linearGradient id="gb2" x1="0" y1="0" x2="1" y2="0"><stop offset="0" stop-color="#c98512"/><stop offset=".4" stop-color="#f6bb2a"/><stop offset=".7" stop-color="#f2b526"/><stop offset="1" stop-color="#d08a14"/></linearGradient>
<linearGradient id="gj2" x1="0" y1="0" x2="1" y2="0"><stop offset="0" stop-color="#b58a3e"/><stop offset=".45" stop-color="#f5e2b0"/><stop offset="1" stop-color="#b99448"/></linearGradient>
<filter id="bl2"><feGaussianBlur stdDeviation=".4"/></filter></defs>
<rect width="50" height="50" fill="url(#gbg2)"/>
<g filter="url(#bl2)">
<path d="M1 50Q3 22 13 3L19 3Q9 22 11 50Z" fill="#f0e0c4" opacity=".9"/>
<rect x="14" y="3.5" width="8" height="2" fill="#8a8070" opacity=".45"/><rect x="25" y="3.5" width="13" height="2" fill="#8a8070" opacity=".4"/>
<rect x="12" y="8.5" width="4" height="3.5" fill="#6a5a48" opacity=".6"/><rect x="17" y="8.5" width="5" height="3.5" fill="#6a5a48" opacity=".5"/><rect x="24" y="8.5" width="20" height="3.5" fill="#5a4a3a" opacity=".55"/>
<rect x="13" y="13" width="29" height="4" fill="#dcba74"/>
<path d="M26 17Q35 30 30 50H24Q30 32 25 17Z" fill="#f6d56a" opacity=".85"/>
<rect x="14" y="19" width="8" height="8" rx="2" fill="#c29440"/>
<rect x="9" y="20" width="19" height="7" rx="1" fill="#cc9430"/>
<rect x="9" y="26" width="20" height="24" rx="2" fill="url(#gb2)"/>
<rect x="14" y="30" width="7" height="13" fill="#c77a1a" opacity=".8"/>
<rect x="15" y="39" width="5" height="3" fill="#4a3a28" opacity=".7"/>
<rect x="35" y="26" width="9" height="3.5" rx="1" fill="#cfa862"/>
<rect x="34.5" y="29.5" width="10" height="2" fill="#f6f3ee"/>
<path d="M34 32H45V42Q45 47 39.5 47Q34 47 34 42Z" fill="url(#gj2)"/>
</g></svg>
<div class="t" style="left:346px;top:819px;font-size:14px;color:#555;font-weight:400;">欧莱雅黄金发膜250ml免蒸 护发</div>
<div class="t" style="left:346px;top:842px;font-size:14px;color:#555;font-weight:400;">膜非护发素改善干枯发防毛躁...</div>
<div class="t" style="left:580px;top:820px;font-size:13px;color:#555;font-weight:400;">￥0.01</div>
<div class="t" style="left:580px;top:848px;font-size:13px;color:#555;font-weight:400;">1件</div>
<div class="t" style="left:925px;top:832px;font-size:14px;color:#555;font-weight:400;">壹仟有限公司</div>
<div class="t" style="left:1096px;top:821px;font-size:14px;color:#555;font-weight:400;">订单金额：￥0.01</div>
<div class="t" style="left:1096px;top:844px;font-size:14px;color:#555;font-weight:400;">平台结算：￥0.00</div>
<div class="t" style="left:1268px;top:794px;font-size:12px;color:#2839e0;font-weight:400;-webkit-text-stroke:0.15px #2839e0;">11185RESNG7BBLNY</div>
<div class="t" style="left:1268px;top:822px;font-size:12px;color:#555;font-weight:400;-webkit-text-stroke:0.15px #555;">橹穆 15212345678</div>
<div class="t" style="left:1268px;top:850px;font-size:12px;color:#555;font-weight:400;-webkit-text-stroke:0.15px #555;">北京市北京市东城区王盼</div>
<div class="t" style="left:1268px;top:873px;font-size:12px;color:#555;font-weight:400;-webkit-text-stroke:0.15px #555;">龙</div>
<div class="t" style="left:1440px;top:832px;font-size:14px;color:#555;font-weight:400;">物流配送</div>
<div class="t" style="left:1583px;top:832px;font-size:14px;color:#555;font-weight:400;">待发货</div>
<div class="b" style="left:230px;top:914px;width:1652px;height:34px;background:#f6f7f9"></div>
<div class="b" style="left:230px;top:948px;width:1652px;height:1px;background:#e8eaf0"></div>
<div class="t" style="left:242px;top:925px;font-size:12px;color:#666;font-weight:400;-webkit-text-stroke:0.15px #666;">订单编号：20260114650941201612800</div>
<div class="t" style="left:475px;top:925px;font-size:12px;color:#666;font-weight:400;-webkit-text-stroke:0.15px #666;">创建时间：2026-01-14 16:46:31</div>
<div class="t" style="left:666px;top:925px;font-size:12px;color:#666;font-weight:400;-webkit-text-stroke:0.15px #666;">支付类型：余额支付</div>
<div class="t" style="left:795px;top:925px;font-size:12px;color:#666;font-weight:400;-webkit-text-stroke:0.15px #666;">销售店铺：官方自营店</div>
<div class="t" style="left:1765px;top:923px;font-size:14px;color:#2839e0;font-weight:400;-webkit-text-stroke:0.2px #2839e0;">详情</div>
<div class="t" style="left:1811px;top:923px;font-size:14px;color:#2839e0;font-weight:400;-webkit-text-stroke:0.2px #2839e0;">支付信息</div>
<div class="b" style="left:908px;top:949px;width:1px;height:10px;background:#ebeef5"></div>
<svg class="b" style="left:0px;top:0px" width="10" height="10" viewBox="0 0 10 10" fill="none"><path d="M0 0H8A8 8 0 0 0 0 8Z" fill="#f8f8f8"/></svg>
<svg class="b" style="left:1902px;top:0px" width="10" height="10" viewBox="0 0 10 10" fill="none"><path d="M10 0H2A8 8 0 0 1 10 8Z" fill="#f8f8f8"/></svg>
<svg class="b" style="left:0px;top:946px" width="10" height="10" viewBox="0 0 10 10" fill="none"><path d="M0 10V2A8 8 0 0 0 8 10Z" fill="#fafafa"/><path d="M0 2A8 8 0 0 0 8 10" stroke="#9a9a9a" stroke-width="1" fill="none"/></svg>
<svg class="b" style="left:1902px;top:946px" width="10" height="10" viewBox="0 0 10 10" fill="none"><path d="M10 10V2A8 8 0 0 1 2 10Z" fill="#fafafa"/><path d="M10 2A8 8 0 0 1 2 10" stroke="#9a9a9a" stroke-width="1" fill="none"/></svg>
</body></html>
